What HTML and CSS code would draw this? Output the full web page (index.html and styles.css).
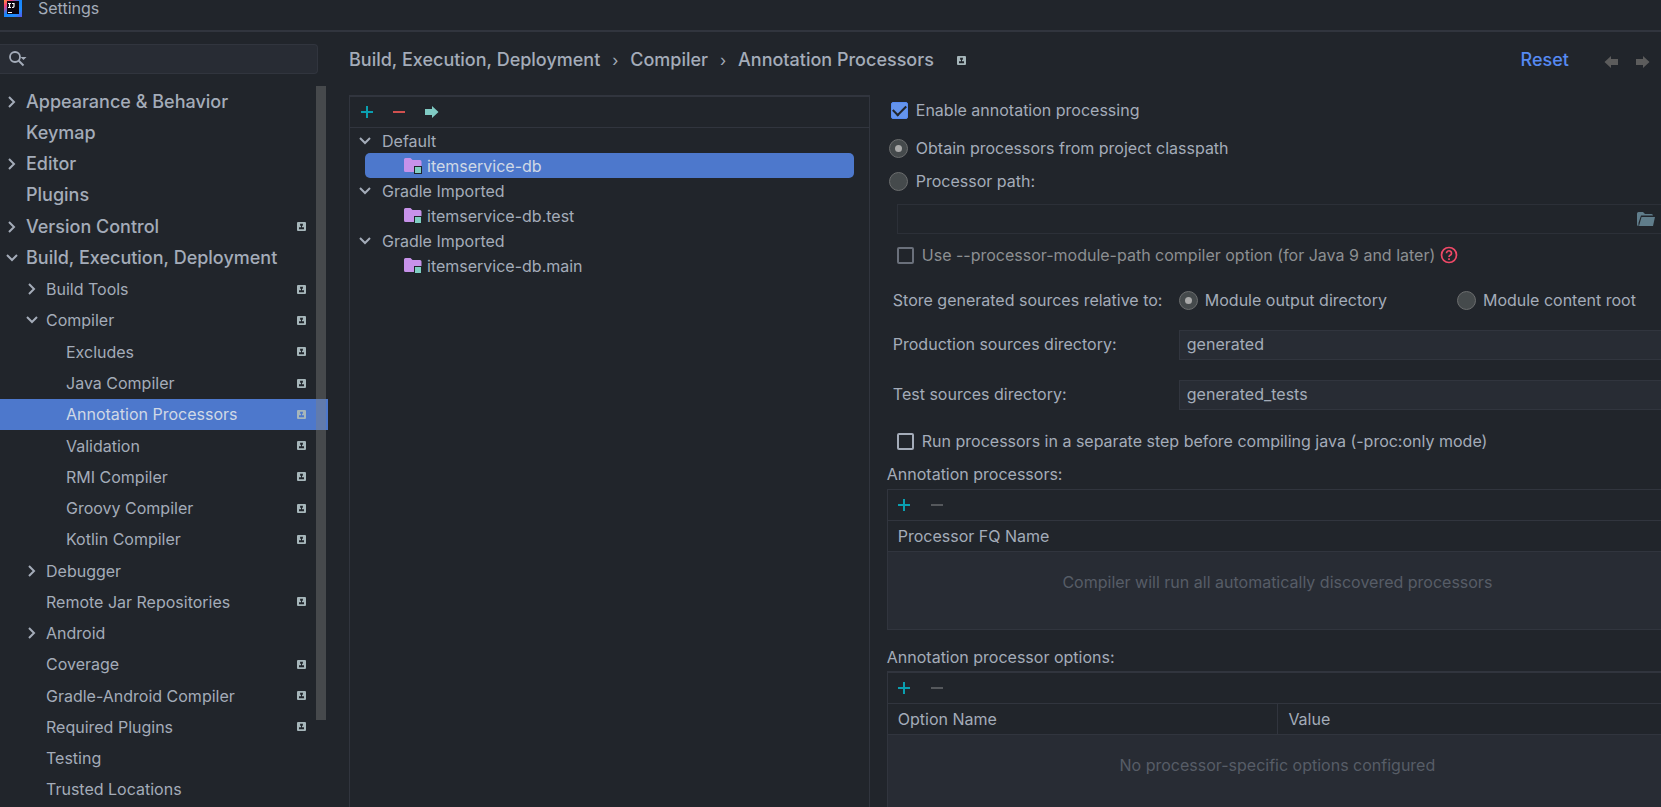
FILE: index.html
```html
<!DOCTYPE html>
<html lang="en">
<head>
<meta charset="utf-8">
<title>Settings</title>
<link rel="stylesheet" href="styles.css">
</head>
<body>
<svg class="defs" aria-hidden="true">
  <symbol id="right" viewBox="0 0 12 12"><path d="M3 1 8 6 3 11" fill="none" stroke="currentColor" stroke-width="2"/></symbol>
  <symbol id="down" viewBox="0 0 12 12"><path d="M1 3 6 8 11 3" fill="none" stroke="currentColor" stroke-width="2"/></symbol>
  <symbol id="badge" viewBox="0 0 9 9"><path fill="currentColor" fill-rule="evenodd" d="M1 0h7a1 1 0 0 1 1 1v7a1 1 0 0 1-1 1H1a1 1 0 0 1-1-1V1a1 1 0 0 1 1-1zM3.100 1.700v2.100h.9V5.300H2V7.200h5V5.300H5V3.800h.9V1.700z"/></symbol>
  <symbol id="plus" viewBox="0 0 12 12"><path d="M6 0v12M0 6h12" stroke="currentColor" stroke-width="2"/></symbol>
  <symbol id="minus" viewBox="0 0 12 12"><path d="M0 6h12" stroke="currentColor" stroke-width="2"/></symbol>
  <symbol id="arrow" viewBox="0 0 14 12"><path d="M0 3h7V0l6.500 6L7 12V9H0z" fill="currentColor"/></symbol>
  <symbol id="module" viewBox="0 0 18 16"><path d="M1.500 0h5l2 2h7.500a1.500 1.500 0 0 1 1.500 1.500V14H1.500A1.500 1.500 0 0 1 0 12.500v-11A1.500 1.500 0 0 1 1.500 0z" fill="#c792ea"/><path d="M10 8h8v8h-8z" fill="#20242a"/><path d="M11 9h6v6h-6z" fill="#7fcfc3"/></symbol>
</svg>
<div class="window">
  <header class="titlebar">
    <svg class="logo" viewBox="0 0 18 17" aria-hidden="true">
      <defs><linearGradient id="lg" x1="0" y1="0" x2="1" y2="1"><stop offset="0" stop-color="#fe9a3b"/><stop offset=".2" stop-color="#f83e78"/><stop offset=".45" stop-color="#1685fb"/><stop offset=".75" stop-color="#1f8cff"/><stop offset="1" stop-color="#5a55e8"/></linearGradient></defs>
      <path fill="url(#lg)" d="M0 0h18v17H0z"/><path fill="#0a0410" d="M3 1h12v13H3z"/>
      <path d="M4 3.500h3M4 7.500h3M5.500 3v5M8 3.500h2v3q0 1-2 1M4 12.500h4" fill="none" stroke="#fff" stroke-width="1.200"/>
    </svg>
    <h1 class="title">Settings</h1>
  </header>
  <div class="body">
    <aside class="sidebar">
      <label class="search">
        <svg class="search-icon" viewBox="0 0 18 16" aria-hidden="true"><circle cx="6" cy="6" r="5" fill="none" stroke="currentColor" stroke-width="1.800"/><path d="M9.500 9.500 14.500 14.500" stroke="currentColor" stroke-width="2"/><path d="M11.500 6h6l-3 3z" fill="currentColor"/></svg>
        <input class="search-input" type="text" aria-label="Search settings">
      </label>
      <div class="tree-wrap">
        <ul class="tree">
          <li class="row top"><svg class="chev"><use href="#right"/></svg><span class="name">Appearance &amp; Behavior</span></li>
          <li class="row top"><span class="chev"></span><span class="name">Keymap</span></li>
          <li class="row top"><svg class="chev"><use href="#right"/></svg><span class="name">Editor</span></li>
          <li class="row top"><span class="chev"></span><span class="name">Plugins</span></li>
          <li class="row top"><svg class="chev"><use href="#right"/></svg><span class="name">Version Control</span><svg class="badge"><use href="#badge"/></svg></li>
          <li class="row top"><svg class="chev"><use href="#down"/></svg><span class="name">Build, Execution, Deployment</span></li>
          <li class="row l2"><svg class="chev"><use href="#right"/></svg><span class="name">Build Tools</span><svg class="badge"><use href="#badge"/></svg></li>
          <li class="row l2"><svg class="chev"><use href="#down"/></svg><span class="name">Compiler</span><svg class="badge"><use href="#badge"/></svg></li>
          <li class="row l3"><span class="chev"></span><span class="name">Excludes</span><svg class="badge"><use href="#badge"/></svg></li>
          <li class="row l3"><span class="chev"></span><span class="name">Java Compiler</span><svg class="badge"><use href="#badge"/></svg></li>
          <li class="row l3 selected"><span class="chev"></span><span class="name">Annotation Processors</span><svg class="badge"><use href="#badge"/></svg></li>
          <li class="row l3"><span class="chev"></span><span class="name">Validation</span><svg class="badge"><use href="#badge"/></svg></li>
          <li class="row l3"><span class="chev"></span><span class="name">RMI Compiler</span><svg class="badge"><use href="#badge"/></svg></li>
          <li class="row l3"><span class="chev"></span><span class="name">Groovy Compiler</span><svg class="badge"><use href="#badge"/></svg></li>
          <li class="row l3"><span class="chev"></span><span class="name">Kotlin Compiler</span><svg class="badge"><use href="#badge"/></svg></li>
          <li class="row l2"><svg class="chev"><use href="#right"/></svg><span class="name">Debugger</span></li>
          <li class="row l2"><span class="chev"></span><span class="name">Remote Jar Repositories</span><svg class="badge"><use href="#badge"/></svg></li>
          <li class="row l2"><svg class="chev"><use href="#right"/></svg><span class="name">Android</span></li>
          <li class="row l2"><span class="chev"></span><span class="name">Coverage</span><svg class="badge"><use href="#badge"/></svg></li>
          <li class="row l2"><span class="chev"></span><span class="name">Gradle-Android Compiler</span><svg class="badge"><use href="#badge"/></svg></li>
          <li class="row l2"><span class="chev"></span><span class="name">Required Plugins</span><svg class="badge"><use href="#badge"/></svg></li>
          <li class="row l2"><span class="chev"></span><span class="name">Testing</span></li>
          <li class="row l2"><span class="chev"></span><span class="name">Trusted Locations</span></li>
        </ul>
        <div class="scrollbar"></div>
      </div>
    </aside>
    <main class="main">
      <div class="head">
        <nav class="crumbs" aria-label="Breadcrumb">
          <span>Build, Execution, Deployment</span><span class="sep">›</span><span>Compiler</span><span class="sep">›</span><span>Annotation Processors</span>
          <svg class="badge crumb-badge"><use href="#badge"/></svg>
        </nav>
        <a class="reset" href="#">Reset</a>
        <button class="nav-btn back" type="button" aria-label="Back"><svg class="arrow"><use href="#arrow"/></svg></button>
        <button class="nav-btn" type="button" aria-label="Forward"><svg class="arrow"><use href="#arrow"/></svg></button>
      </div>
      <div class="panes">
        <section class="profiles">
          <div class="toolbar">
            <button class="tool add" type="button" aria-label="Add profile"><svg class="glyph"><use href="#plus"/></svg></button>
            <button class="tool remove" type="button" aria-label="Remove profile"><svg class="glyph"><use href="#minus"/></svg></button>
            <button class="tool move" type="button" aria-label="Move to"><svg class="arrow"><use href="#arrow"/></svg></button>
          </div>
          <ul class="modules">
            <li class="group"><svg class="chev"><use href="#down"/></svg>Default</li>
            <li class="module chosen"><svg class="mod"><use href="#module"/></svg>itemservice-db</li>
            <li class="group"><svg class="chev"><use href="#down"/></svg>Gradle Imported</li>
            <li class="module"><svg class="mod"><use href="#module"/></svg>itemservice-db.test</li>
            <li class="group"><svg class="chev"><use href="#down"/></svg>Gradle Imported</li>
            <li class="module"><svg class="mod"><use href="#module"/></svg>itemservice-db.main</li>
          </ul>
        </section>
        <form class="options">
          <label class="opt enable"><input class="check" type="checkbox" checked>Enable annotation processing</label>
          <label class="opt obtain"><input class="radio" type="radio" name="source" checked>Obtain processors from project classpath</label>
          <label class="opt path"><input class="radio" type="radio" name="source">Processor path:</label>
          <div class="path-field">
            <input class="path-input" type="text" aria-label="Processor path" disabled>
            <button class="browse" type="button" aria-label="Browse"><svg class="folder" viewBox="0 0 18 14"><path d="M0 1.500A1.500 1.500 0 0 1 1.500 0H6l2 2h6.500A1.500 1.500 0 0 1 16 3.500H4L1.500 11V14A1.500 1.500 0 0 1 0 12.500z" fill="currentColor"/><path d="M4.500 5H18l-2 9H2z" fill="currentColor"/></svg></button>
          </div>
          <div class="inset module-path">
            <label class="opt muted"><input class="check dim" type="checkbox">Use --processor-module-path compiler option (for Java 9 and later)</label>
            <svg class="help" viewBox="0 0 18 18" aria-hidden="true"><circle cx="9" cy="9" r="7.500" fill="none" stroke="#ef4967" stroke-width="1.700"/><path d="M6.500 7.200a2.500 2.400 0 1 1 4 1.900Q9 10 9 11M9 12.200v1.800" fill="none" stroke="#ef4967" stroke-width="1.700"/></svg>
          </div>
          <div class="store">
            <span>Store generated sources relative to:</span>
            <div class="store-choices">
              <label class="opt"><input class="radio" type="radio" name="root" checked>Module output directory</label>
              <label class="opt"><input class="radio" type="radio" name="root">Module content root</label>
            </div>
          </div>
          <div class="dirs">
            <label class="dir-label" for="prod">Production sources directory:</label><input class="field" id="prod" type="text" value="generated">
            <label class="dir-label" for="test">Test sources directory:</label><input class="field" id="test" type="text" value="generated_tests">
          </div>
          <div class="inset"><label class="opt"><input class="check" type="checkbox">Run processors in a separate step before compiling java (-proc:only mode)</label></div>
          <h2 class="caption">Annotation processors:</h2>
          <div class="box first-box">
            <div class="toolbar">
              <button class="tool add" type="button" aria-label="Add processor"><svg class="glyph"><use href="#plus"/></svg></button>
              <button class="tool off" type="button" aria-label="Remove processor"><svg class="glyph"><use href="#minus"/></svg></button>
            </div>
            <table class="grid">
              <thead><tr><th>Processor FQ Name</th></tr></thead>
              <tbody><tr><td class="empty">Compiler will run all automatically discovered processors</td></tr></tbody>
            </table>
          </div>
          <h2 class="caption second">Annotation processor options:</h2>
          <div class="box last-box">
            <div class="toolbar">
              <button class="tool add" type="button" aria-label="Add option"><svg class="glyph"><use href="#plus"/></svg></button>
              <button class="tool off" type="button" aria-label="Remove option"><svg class="glyph"><use href="#minus"/></svg></button>
            </div>
            <table class="grid">
              <thead><tr><th>Option Name</th><th>Value</th></tr></thead>
              <tbody><tr><td class="empty" colspan="2">No processor-specific options configured</td></tr></tbody>
            </table>
          </div>
        </form>
      </div>
    </main>
  </div>
</div>
</body>
</html>
```
FILE: styles.css
```css
* { box-sizing: border-box; }
body {
  margin: 0;
  background: #21252b;
  color: #a4acb9;
  font: 16px/20px Inter, sans-serif;
  overflow: hidden;
}
ul { list-style: none; margin: 0; padding: 0; }
svg { display: block; flex: none; }
input, button { font: inherit; color: inherit; margin: 0; }
button { background: none; border: 0; padding: 0; display: flex; }
.defs { width: 0; height: 0; position: absolute; }

.window { min-height: 100vh; display: flex; flex-direction: column; }
.titlebar { display: flex; height: 32px; border-bottom: 2px solid #31353e; padding-left: 4px; gap: 16px; }
.logo { width: 18px; height: 17px; }
.title { margin: 0; font-size: 16px; font-weight: 400; line-height: 17px; }
.body { flex: 1; display: flex; }

.sidebar { width: 328px; flex: none; display: flex; flex-direction: column; padding-top: 12px; }
.search {
  display: flex; align-items: center; height: 30px; width: 318px; padding-left: 9px;
  background: #282c34; border: 1px solid #31353e; border-left: 0; border-radius: 0 4px 4px 0;
}
.search-icon { width: 18px; height: 16px; }
.search-input { flex: 1; min-width: 0; background: none; border: 0; outline: 0; }
.tree-wrap { flex: 1; display: flex; position: relative; padding: 12px 0 3px; }
.tree { flex: 1; display: flex; flex-direction: column; }
.row { flex: 1 0 31px; display: flex; align-items: center; padding: 0 22px 0 6px; }
.row.l2 { padding-left: 26px; }
.row.l3 { padding-left: 46px; }
.row.top { font-size: 18px; font-weight: 500; }
.name { flex: 1; padding-left: 8px; }
.chev { width: 12px; height: 12px; flex: none; }
.badge { width: 9px; height: 9px; color: #a6b6ba; }
.selected { background: #4d78cc; color: #d0d8e6; }
.scrollbar { position: absolute; top: 12px; right: 2px; width: 10px; height: 634px; background: rgba(128, 128, 128, .4); }

.main { flex: 1; min-width: 0; display: flex; flex-direction: column; padding-left: 21px; overflow: hidden; }
.head { display: flex; align-items: center; height: 63px; padding: 0 11px 7px 0; }
.crumbs { flex: 1; display: flex; align-items: center; font-size: 18px; font-weight: 500; }
.sep { width: 30px; text-align: center; font-size: 16px; font-weight: 400; }
.crumb-badge { margin-left: 23px; }
.reset { color: #568af2; font-size: 18px; font-weight: 500; text-decoration: none; margin-right: 35px; }
.nav-btn { color: #5c5c5c; padding-top: 3px; }
.back { transform: scaleX(-1); margin-right: 18px; }
.arrow { width: 14px; height: 12px; }

.panes { flex: 1; display: grid; grid-template-columns: 2fr 3fr; gap: 17px; margin-right: -7px; }
.profiles { border: 1px solid #31353e; border-top-width: 2px; border-bottom: 0; }
.toolbar { display: flex; align-items: center; height: 31px; padding-left: 10px; gap: 20px; border-bottom: 1px solid #31353e; }
.profiles .toolbar { padding-left: 11px; }
.glyph { width: 12px; height: 12px; }
.add { color: #0a9fb0; }
.remove { color: #d0504f; }
.move { color: #80cbc4; }
.off { color: #55585c; margin-left: 1px; }
.modules { padding: 0 15px; }
.group, .module { display: flex; align-items: center; height: 25px; }
.group { margin-left: -6px; gap: 11px; }
.module { padding-left: 39px; gap: 5px; border-radius: 5px; }
.mod { width: 18px; height: 16px; }
.chosen { background: #4d78cc; color: #d0d8e6; }

.options { display: flex; flex-direction: column; padding-top: 5px; }
.opt { display: flex; align-items: center; height: 20px; gap: 8px; }
.check {
  appearance: none; width: 17px; height: 17px; flex: none; display: grid;
  border: 2px solid #a4acb9; border-radius: 2px;
}
.check.dim { border-color: #6a707b; }
.check:checked { background: #6494ed; border: 1px solid #568af2; }
.check:checked::after {
  content: ""; place-self: center; width: 11px; height: 6px; margin-bottom: 3px;
  border: solid #21252b; border-width: 0 0 2px 2px; transform: rotate(-45deg);
}
.radio {
  appearance: none; width: 19px; height: 19px; flex: none; display: grid;
  background: #454a4c; border: 1px solid #6b6d6e; border-radius: 50%;
}
.radio:checked::after { content: ""; place-self: center; width: 7px; height: 7px; border-radius: 50%; background: #a9a9a9; }
.enable { padding-left: 4px; }
.obtain, .path { padding-left: 2px; }
.obtain { margin-top: 18px; }
.path { margin-top: 13px; }
.path-field {
  display: flex; align-items: center; height: 30px; margin: 13px 0 0 10px; padding-right: 13px;
  border: 1px solid #2c3038; border-right: 0;
}
.path-input { flex: 1; min-width: 0; background: none; border: 0; }
.browse { color: #607d8b; }
.folder { width: 18px; height: 14px; }
.inset { display: flex; align-items: center; padding-left: 10px; }
.module-path { margin-top: 11px; gap: 5px; }
.muted { color: #8c8f92; }
.help { width: 18px; height: 18px; }
.store, .dirs { display: grid; grid-template-columns: 286px 1fr; align-items: center; padding-left: 6px; }
.store { margin-top: 25px; }
.store-choices { display: flex; gap: 70px; }
.store-choices .opt { gap: 7px; }
.dirs { row-gap: 20px; margin: 20px 0 21px; }
.dir-label { padding-bottom: 2px; }
.field { height: 30px; width: 100%; padding: 0 7px 2px; background: #282c34; border: 1px solid #31353e; border-right: 0; outline: 0; }
.caption { margin: 13px 0 5px; font-size: 16px; font-weight: 400; line-height: 20px; }
.caption.second { margin: 17px 0 4px; }
.box { border: 1px solid #31353e; background: #282c34; }
.box .toolbar { background: #21252b; }
.first-box { height: 141px; }
.last-box { flex: 1 0 137px; border-top-width: 2px; border-bottom: 0; }
.grid { width: 100%; border-collapse: separate; border-spacing: 0; table-layout: fixed; }
th { height: 31px; padding: 0 10px; text-align: left; font-weight: 400; background: #21252b; border-bottom: 1px solid #31353e; }
th + th { border-left: 1px solid #31353e; }
.empty { height: 60px; padding: 0; text-align: center; color: #575d67; }
```
